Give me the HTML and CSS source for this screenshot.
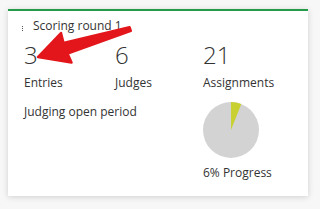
FILE: index.html
```html
<!DOCTYPE html>
<html>
<head>
<meta charset="utf-8">
<link rel="stylesheet" href="styles.css">
</head>
<body>
<div class="card">
  <div class="header">
    <span class="kebab"><i></i><i></i><i></i></span>
    <span class="title">Scoring round 1</span>
  </div>
  <div class="stats">
    <div class="stat"><div class="num">3</div><div class="label">Entries</div></div>
    <div class="stat"><div class="num">6</div><div class="label">Judges</div></div>
    <div class="stat"><div class="num">21</div><div class="label">Assignments</div></div>
  </div>
  <div class="bottom">
    <div class="period">Judging open period</div>
    <div class="progress">
      <svg class="pie" width="56" height="56" viewBox="0 0 56 56">
        <circle cx="28" cy="28" r="28" fill="#d3d3d3"/>
        <path d="M28 28 L28 0 A28 28 0 0 1 38.31 1.97 Z" fill="#c9d132"/>
      </svg>
      <div class="label">6% Progress</div>
    </div>
  </div>
  <svg class="arrow" width="140" height="70" viewBox="0 0 140 70">
    <polygon points="38,57 61,33 63.5,43 129.5,27.2 130.8,30.8 67.5,53.5 71.5,62.5" fill="#e3161b" stroke="#e3161b" stroke-width="2.5" stroke-linejoin="round"/>
  </svg>
</div>
</body>
</html>
```

FILE: styles.css
```css
html, body {
  margin: 0;
  padding: 0;
}
body {
  background: #f7f7f7;
  width: 320px;
  height: 209px;
  padding: 9px 0 0 8px;
  box-sizing: border-box;
  font-family: "Open Sans", "Liberation Sans", sans-serif;
  color: #333;
}
.card {
  position: relative;
  width: 300px;
  height: 187px;
  box-sizing: border-box;
  background: #fff;
  border-top: 2px solid #259a48;
  box-shadow: 0 1px 6px rgba(0, 0, 0, 0.16);
  padding: 0 16px;
}
.header {
  display: flex;
  align-items: center;
  height: 16px;
  padding-top: 7px;
  font-size: 12px;
  line-height: 16px;
}
.kebab {
  display: flex;
  flex-direction: column;
  gap: 1px;
  width: 2px;
  margin: 4px 9px 0 -2px;
}
.kebab i {
  display: block;
  width: 1px;
  height: 1px;
  background: #555;
}
.stats {
  display: grid;
  grid-template-columns: 91px 88px 1fr;
  margin-top: 9px;
}
.num {
  font-size: 24px;
  font-weight: 300;
  line-height: 24px;
}
.label {
  font-size: 12px;
  line-height: 16px;
  margin-top: 8px;
}
.bottom {
  display: grid;
  grid-template-columns: 179px 1fr;
  margin-top: 11px;
}
.period {
  font-size: 12px;
  line-height: 16px;
  padding-top: 2px;
}
.pie {
  display: block;
}
.progress .label {
  margin-top: 7px;
}
.arrow {
  position: absolute;
  left: -8px;
  top: -11px;
}
```
